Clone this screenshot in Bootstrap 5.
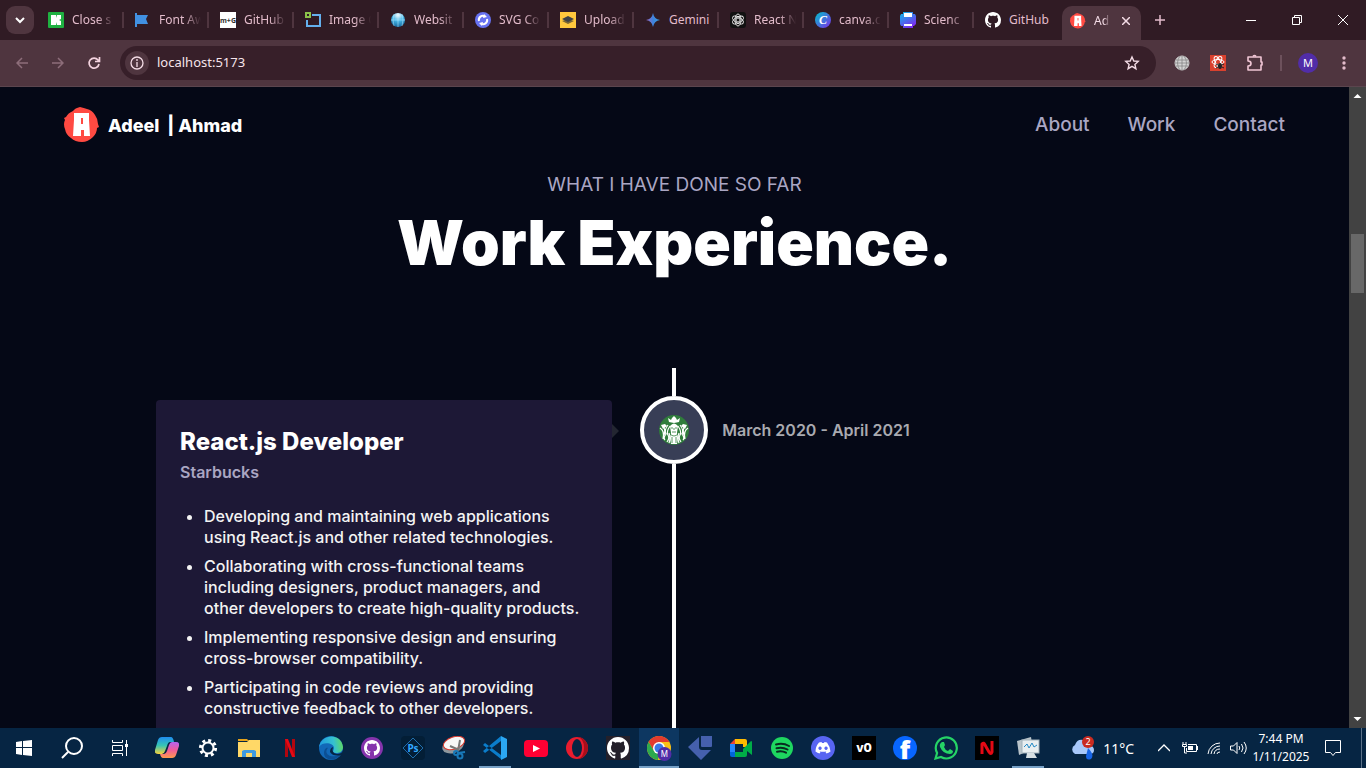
<!DOCTYPE html>
<html lang="en">
<head>
<meta charset="utf-8">
<meta name="viewport" content="width=device-width, initial-scale=1">
<title>Adeel Ahmad | Work Experience</title>
<link href="https://cdn.jsdelivr.net/npm/bootstrap@5.3.0/dist/css/bootstrap.min.css" rel="stylesheet">
<style>
  body { background: #050816; font-family: Inter, sans-serif; color: #fff; }
  button { background: none; border: 0; padding: 0; color: inherit; }
  svg { display: block; flex: none; }
  .chrome-ui, .taskbar { font-family: "Noto Sans", sans-serif; }
  /* tab strip */
  .tabstrip { background: #301b24; height: 40px; color: #e3bccb; font-size: 12px; }
  .tab-menu { width: 28px; height: 28px; border-radius: 9px; background: #4f353f; margin: 6px; }
  .tab { flex: 0 1 85px; min-width: 0; height: 40px; padding-left: 8px; position: relative; gap: 8px; }
  .tab.first { flex-basis: 87px; }
  .tab::after { content: ""; position: absolute; right: 3px; top: 12px; width: 2px; height: 16px; background: #4f353f; }
  .tab.last::after, .tab.current::after { display: none; }
  .tab-label { overflow: hidden; white-space: nowrap; flex: 0 0 42px; text-align: left; -webkit-mask-image: linear-gradient(90deg, #000 60%, transparent); mask-image: linear-gradient(90deg, #000 60%, transparent); }
  .tab-label.whole { -webkit-mask-image: none; mask-image: none; overflow: visible; }
  .tab.current { flex-basis: 79px; background: #4f353f; height: 34px; border-radius: 10px 10px 0 0; align-self: flex-end; padding-bottom: 5px; color: #f4dce6; }
  .tab.current .tab-label { flex-basis: 16px; }
  .new-tab { padding: 0 14px; }
  .win-btn { width: 46px; height: 40px; color: #fff; }
  /* toolbar */
  .toolbar { background: #4f353f; height: 46px; color: #e3bccb; padding-right: 20px; }
  .nav-btn { width: 36px; height: 34px; }
  .dim { opacity: .42; }
  .omnibox { background: #371f29; border-radius: 17px; height: 34px; padding: 0 16px 0 5px; }
  .site-info { width: 24px; height: 24px; border-radius: 50%; background: #4f353f; }
  .address { background: none; border: 0; outline: 0; color: #f6e4eb; font-size: 13px; padding: 0; }
  .extensions { padding-left: 18px; gap: 20px; }
  .divider { width: 2px; height: 16px; background: #6d515c; }
  .account { gap: 16px; margin-left: 16px; }
  .kebab { margin-left: 24px; }
  .avatar { width: 20px; height: 20px; border-radius: 50%; background: #512da8; color: #fff; font-size: 11px; }
  /* web page */
  .viewport { min-height: 0; border-top: 1px solid #5b454e; }
  .site { background: #050816; }
  .site-nav { padding: 20px 64px; height: 76px; }
  .brand-name { font-size: 18px; font-weight: 800; color: #fff; }
  .nav-links { gap: 38px; }
  .nav-item-link { font-size: 19px; font-weight: 500; color: #aaa6c3; text-decoration: none; }
  .intro { padding-top: 8px; }
  .eyebrow { font-size: 19px; line-height: 28px; color: #aaa6c3; }
  .headline { font-size: 62px; line-height: 60px; font-weight: 900; margin-top: 14px; }
  .timeline { max-width: 1037px; margin-top: 95px; }
  .job { width: 44%; background: #1d1836; border-radius: 4px 4px 0 0; padding: 24px; margin-top: 32px; position: relative; }
  .job::after { content: ""; position: absolute; left: 100%; top: 24px; border: 7px solid transparent; border-left-color: #232631; border-right-width: 0; }
  .job-title { font-size: 24px; line-height: 36px; font-weight: 800; }
  .job-company { font-size: 16px; line-height: 24px; font-weight: 600; color: #aaa6c3; }
  .job-list { margin-top: 22px; padding-left: 24px; font-size: 16px; line-height: 21px; font-weight: 500; color: #f3f3f3; white-space: nowrap; }
  .job-list li + li { margin-top: 8px; }
  .rail { margin-left: 28px; }
  .rail-top { width: 4px; height: 28px; background: #fff; }
  .rail-line { width: 4px; background: #fff; }
  .rail-icon { width: 68px; height: 68px; border-radius: 50%; border: 4px solid #fff; background: #383e56; }
  .job-date { margin: 50px 0 0 14px; font-size: 16px; line-height: 24px; font-weight: 600; color: #a9aab0; }
  .scrollbar { width: 17px; background: #424242; padding: 4px 0; color: #fff; }
  .scroll-thumb { width: 13px; height: 59px; margin-top: 134px; background: #686868; }
  /* taskbar */
  .taskbar { background: #062543; height: 40px; color: #fff; }
  .sys-btn { width: 48px; height: 40px; }
  .apps { gap: 1px; margin-left: 3px; }
  .app-btn { width: 40px; height: 40px; position: relative; }
  .app-btn.open::after { content: ""; position: absolute; left: 4px; right: 4px; bottom: 0; height: 2px; background: #76a0c6; }
  .app-btn.active { background: #0d3761; }
  .app-btn.active::after { left: 0; right: 0; }
  .tray { padding-right: 4px; }
  .weather { font-size: 14px; gap: 7px; margin-right: 24px; }
  .tray-icons { gap: 8px; }
  .clock { font-size: 12px; line-height: 18px; width: 68px; }
  .notif { width: 47px; height: 40px; border-right: 1px solid #5b7188; padding-right: 10px; }
</style>
</head>
<body>
<svg width="0" height="0" class="position-absolute" aria-hidden="true">
  <defs>
    <symbol id="github" viewBox="0 0 16 16"><path fill="currentColor" d="M8 0C3.58 0 0 3.58 0 8c0 3.54 2.29 6.53 5.47 7.59.4.07.55-.17.55-.38 0-.19-.01-.82-.01-1.49-2.01.37-2.53-.49-2.69-.94-.09-.23-.48-.94-.82-1.13-.28-.15-.68-.52-.01-.53.63-.01 1.08.58 1.23.82.72 1.21 1.87.87 2.33.66.07-.52.28-.87.51-1.07-1.78-.2-3.64-.89-3.64-3.95 0-.87.31-1.59.82-2.15-.08-.2-.36-1.02.08-2.12 0 0 .67-.21 2.2.82.64-.18 1.32-.27 2-.27s1.36.09 2 .27c1.53-1.04 2.2-.82 2.2-.82.44 1.1.16 1.92.08 2.12.51.56.82 1.27.82 2.15 0 3.07-1.87 3.75-3.65 3.95.29.25.54.73.54 1.48 0 1.07-.01 1.93-.01 2.2 0 .21.15.46.55.38A8.01 8.01 0 0 0 16 8c0-4.42-3.58-8-8-8"/></symbol>
    <symbol id="logo" viewBox="0 0 36 36"><path fill="#ff4a42" d="M9 4q2-3 7-4 4 1 7 2 5 1 8 6 3 4 3 9l1 3-2 1q0 5-4 9-5 5-11 5-7 0-11-4-5-3-6-9-2-5 0-9l-1-2 2-1q2-4 7-6"/><path fill="#fff" fill-rule="evenodd" d="M10 6h15v7l1 16h-6v-6h-3v6H9l1-16zM17 11v6h2v-6z"/></symbol>
    <linearGradient id="gCanva" x1="0" y1="0" x2="1" y2="1"><stop offset="0" stop-color="#00c4cc"/><stop offset="1" stop-color="#7d2ae8"/></linearGradient>
    <linearGradient id="gSci" x1="0" y1="0" x2=".6" y2="1"><stop offset="0" stop-color="#08c0e8"/><stop offset="1" stop-color="#7b2cf0"/></linearGradient>
    <linearGradient id="gGem" x1="0" y1="0" x2="1" y2="0"><stop offset="0" stop-color="#a06bc9"/><stop offset=".5" stop-color="#3f82dc"/><stop offset="1" stop-color="#35a5e5"/></linearGradient>
    <radialGradient id="gGlobe" cx=".5" cy=".15" r=".9"><stop offset="0" stop-color="#fff"/><stop offset=".45" stop-color="#48b8e8"/><stop offset="1" stop-color="#0d5f96"/></radialGradient>
    <linearGradient id="gCopA" x1="0" y1="0" x2="0" y2="1"><stop offset="0" stop-color="#1f8df0"/><stop offset=".5" stop-color="#36c5b4"/><stop offset="1" stop-color="#f7d23c"/></linearGradient>
    <linearGradient id="gCopB" x1="0" y1="0" x2="0" y2="1"><stop offset="0" stop-color="#b463f1"/><stop offset=".5" stop-color="#f05c9a"/><stop offset="1" stop-color="#ff9a4c"/></linearGradient>
    <linearGradient id="gEdge" x1="0" y1=".3" x2="1" y2=".2"><stop offset="0" stop-color="#1f9bde"/><stop offset=".6" stop-color="#35c1d0"/><stop offset="1" stop-color="#62dc5a"/></linearGradient>
  </defs>
</svg>

<div class="vh-100 d-flex flex-column overflow-hidden">
  <header class="chrome-ui flex-shrink-0">
    <div class="tabstrip d-flex align-items-center">
      <button class="tab-menu d-flex align-items-center justify-content-center flex-shrink-0" aria-label="Search tabs"><svg width="10" height="10" viewBox="0 0 10 10" fill="none" stroke="#fff" stroke-width="2"><path d="m1 3 4 4 4-4"/></svg></button>
      <button class="tab first d-flex align-items-center"><svg width="16" height="16" viewBox="0 0 16 16"><rect width="16" height="16" rx="1" fill="#1fb141"/><path fill="#fff" d="M3 3h5v3l1-3h4v4l-2 1 2 1v4H9l-1-3v3H3z"/></svg><span class="tab-label">Close s</span></button>
      <button class="tab d-flex align-items-center"><svg width="16" height="16" viewBox="0 0 16 16" fill="#4191e2"><path d="M0 1h2v14H0zM2 3h11l-2 4 2 5H2z"/></svg><span class="tab-label">Font Aw</span></button>
      <button class="tab d-flex align-items-center"><svg width="16" height="16" viewBox="0 0 16 16"><rect width="16" height="16" fill="#fff"/><text x="8" y="11" font-size="7" font-weight="700" text-anchor="middle" fill="#333">m+G</text></svg><span class="tab-label">GitHub</span></button>
      <button class="tab d-flex align-items-center"><svg width="16" height="16" viewBox="0 0 16 16" fill="none"><path d="M7 3h8v11H2V8" stroke="#64b0ee" stroke-width="2"/><path d="M1 1h4v4H1z" stroke="#8bc34a" stroke-width="2"/></svg><span class="tab-label">Image C</span></button>
      <button class="tab d-flex align-items-center"><svg width="16" height="16" viewBox="0 0 16 16"><circle cx="8" cy="8" r="7" fill="url(#gGlobe)"/><path d="M8 1v14M1 8h14M4 2q-2 6 0 12M12 2q2 6 0 12" stroke="#bfeaff" stroke-width=".5" fill="none"/></svg><span class="tab-label">Websit</span></button>
      <button class="tab d-flex align-items-center"><svg width="16" height="16" viewBox="0 0 16 16"><circle cx="8" cy="8" r="8" fill="#6772f2"/><path d="M4 9a4 4 0 0 1 6-4.500M12 7a4 4 0 0 1-6 4.500" stroke="#fff" stroke-width="2" fill="none"/><path fill="#fff" d="m9 2 3 3-4 1zM7 14l-3-3 4-1z"/></svg><span class="tab-label">SVG Co</span></button>
      <button class="tab d-flex align-items-center"><svg width="16" height="16" viewBox="0 0 16 16"><rect width="16" height="16" fill="#ffc83d"/><path fill="#7b6734" d="m2 9 6 3 6-3-6-2z"/><path fill="#3d4247" d="m2 7 6-3 6 3-6 3z"/></svg><span class="tab-label">Upload</span></button>
      <button class="tab d-flex align-items-center"><svg width="16" height="16" viewBox="0 0 16 16"><path fill="url(#gGem)" d="M8 1q1 6 7 7-6 1-7 7-1-6-7-7 6-1 7-7z"/></svg><span class="tab-label whole">Gemini</span></button>
      <button class="tab d-flex align-items-center"><svg width="16" height="16" viewBox="0 0 16 16"><rect width="16" height="16" rx="3" fill="#111"/><g fill="none" stroke="#eee" stroke-width=".9"><circle cx="8" cy="8" r="2"/><ellipse cx="8" cy="8" rx="3" ry="6"/><ellipse cx="8" cy="8" rx="3" ry="6" transform="rotate(60 8 8)"/><ellipse cx="8" cy="8" rx="3" ry="6" transform="rotate(120 8 8)"/></g></svg><span class="tab-label">React N</span></button>
      <button class="tab d-flex align-items-center"><svg width="16" height="16" viewBox="0 0 16 16"><circle cx="8" cy="8" r="8" fill="url(#gCanva)"/><text x="8" y="12" font-family="Liberation Serif" font-style="italic" font-weight="700" font-size="12" text-anchor="middle" fill="#fff">C</text></svg><span class="tab-label">canva.c</span></button>
      <button class="tab d-flex align-items-center"><svg width="16" height="16" viewBox="0 0 16 16"><path fill="url(#gSci)" d="M3 0h10v2h2l1 2v8l-2 2h-1v2H3v-2H1l-1-2V4l1-2h2z"/><path fill="#fff" d="M4 1h8v4H4zM4 12h8v2H4z"/></svg><span class="tab-label">Scienc</span></button>
      <button class="tab last d-flex align-items-center"><svg width="16" height="16" color="#fff"><use href="#github"/></svg><span class="tab-label whole">GitHub</span></button>
      <div class="tab current d-flex align-items-center"><svg width="16" height="16"><use href="#logo"/></svg><span class="tab-label">Ad</span><button aria-label="Close tab" class="ps-1"><svg width="8" height="8" viewBox="0 0 8 8" stroke="currentColor" stroke-width="1.500"><path d="m0 0 8 8M8 0 0 8"/></svg></button></div>
      <button class="new-tab" aria-label="New tab"><svg width="10" height="10" viewBox="0 0 10 10" stroke="currentColor" stroke-width="1.500"><path d="M5 0v10M0 5h10"/></svg></button>
      <div class="ms-auto d-flex flex-shrink-0">
        <button class="win-btn d-flex align-items-center justify-content-center" aria-label="Minimize"><svg width="10" height="10" viewBox="0 0 10 10"><path fill="#fff" d="M0 5h10v1H0z"/></svg></button>
        <button class="win-btn d-flex align-items-center justify-content-center" aria-label="Restore"><svg width="10" height="10" viewBox="0 0 10 10" fill="none" stroke="#fff"><path d="M.5 2.500h7v7h-7zM2.500 2V.5h7v7H8"/></svg></button>
        <button class="win-btn d-flex align-items-center justify-content-center" aria-label="Close"><svg width="10" height="10" viewBox="0 0 10 10" stroke="#fff"><path d="m0 0 10 10M10 0 0 10"/></svg></button>
      </div>
    </div>
    <div class="toolbar d-flex align-items-center">
      <div class="d-flex ps-1">
        <button class="nav-btn dim d-flex align-items-center justify-content-center" aria-label="Back"><svg width="12" height="12" viewBox="0 0 12 12" fill="none" stroke="currentColor" stroke-width="1.500"><path d="M12 6H1M6 1 1 6l5 5"/></svg></button>
        <button class="nav-btn dim d-flex align-items-center justify-content-center" aria-label="Forward"><svg width="12" height="12" viewBox="0 0 12 12" fill="none" stroke="currentColor" stroke-width="1.500"><path d="M0 6h11M6 1l5 5-5 5"/></svg></button>
        <button class="nav-btn d-flex align-items-center justify-content-center" aria-label="Reload"><svg width="14" height="14" viewBox="0 0 14 14" fill="none" stroke="#f4d3df" stroke-width="1.700"><path d="M12 8a5 5 0 1 1-1-4l1 1M12.500 1v4.500H8"/></svg></button>
      </div>
      <div class="omnibox flex-grow-1 d-flex align-items-center ms-2">
        <button class="site-info d-flex align-items-center justify-content-center" aria-label="Site information"><svg width="14" height="14" viewBox="0 0 14 14" fill="none" stroke="#f4dce6" stroke-width="1.300"><circle cx="7" cy="7" r="6"/><path d="M7 6v5M7 3v2"/></svg></button>
        <input class="address flex-grow-1 ms-2" type="text" value="localhost:5173" aria-label="Address">
        <button aria-label="Bookmark"><svg width="16" height="16" viewBox="0 0 16 16" fill="none" stroke="#f4dce6" stroke-width="1.400"><path d="m8 2 1.800 4 4.400.4-3.300 3 1 4.300L8 11.400l-3.900 2.300 1-4.300-3.300-3L6.200 6z"/></svg></button>
      </div>
      <div class="extensions d-flex align-items-center">
        <button aria-label="Translate"><svg width="16" height="16" viewBox="0 0 16 16" fill="none" stroke="#858585"><circle cx="8" cy="8" r="7" fill="#d4d4d4" stroke="#c8c8c8"/><path d="M8 1v14M1 8h14M2 5h12M2 11h12M6 1q-5 7 0 14M10 1q5 7 0 14" stroke-width=".8"/></svg></button>
        <button aria-label="React tools"><svg width="16" height="16" viewBox="0 0 16 16"><rect width="16" height="16" fill="#d9412e"/><g fill="none" stroke="#fff"><ellipse cx="8" cy="7" rx="6" ry="2.500"/><ellipse cx="8" cy="7" rx="6" ry="2.500" transform="rotate(60 8 7)"/><ellipse cx="8" cy="7" rx="6" ry="2.500" transform="rotate(120 8 7)"/></g><ellipse cx="10" cy="11" rx="2" ry="3" fill="#222"/><path d="m6 9 8 4M6 13l8-4" stroke="#222"/></svg></button>
        <button aria-label="Extensions"><svg width="18" height="18" viewBox="0 0 18 18" fill="none" stroke="#f1c6d5" stroke-width="1.600" stroke-linejoin="round"><path d="M2 3h13v5h1v3h-1v5H2v-4q3 0 3-2.500T2 7z"/><path d="M7 2.500q1.500-2 3 0"/></svg></button>
      </div>
      <div class="account d-flex align-items-center">
        <span class="divider"></span>
        <button class="avatar d-flex align-items-center justify-content-center" aria-label="Profile">M</button>
      </div>
      <button class="kebab" aria-label="Menu"><svg width="4" height="16" viewBox="0 0 4 16" fill="currentColor"><circle cx="2" cy="3" r="1.700"/><circle cx="2" cy="8" r="1.700"/><circle cx="2" cy="13" r="1.700"/></svg></button>
    </div>
  </header>

  <div class="viewport flex-grow-1 d-flex">
    <main class="site flex-grow-1 overflow-hidden d-flex flex-column">
      <nav class="site-nav d-flex align-items-center justify-content-between flex-shrink-0">
        <a href="#" class="d-flex align-items-center gap-2 text-decoration-none"><svg width="36" height="36"><use href="#logo"/></svg><span class="brand-name">Adeel &nbsp;| Ahmad</span></a>
        <div class="nav-links d-flex"><a class="nav-item-link" href="#about">About</a><a class="nav-item-link" href="#work">Work</a><a class="nav-item-link" href="#contact">Contact</a></div>
      </nav>
      <div class="intro text-center flex-shrink-0">
        <p class="eyebrow mb-0 text-uppercase">What I have done so far</p>
        <h2 class="headline mb-0">Work Experience.</h2>
      </div>
      <section class="timeline w-100 mx-auto d-flex flex-grow-1">
        <article class="job">
          <h3 class="job-title mb-0">React.js Developer</h3>
          <p class="job-company mb-0">Starbucks</p>
          <ul class="job-list mb-0">
            <li>Developing and maintaining web applications<br>using React.js and other related technologies.</li>
            <li>Collaborating with cross-functional teams<br>including designers, product managers, and<br>other developers to create high-quality products.</li>
            <li>Implementing responsive design and ensuring<br>cross-browser compatibility.</li>
            <li>Participating in code reviews and providing<br>constructive feedback to other developers.</li>
          </ul>
        </article>
        <div class="rail d-flex flex-column align-items-center">
          <span class="rail-top flex-shrink-0"></span>
          <span class="rail-icon d-flex align-items-center justify-content-center flex-shrink-0">
            <svg width="30" height="30" viewBox="0 0 30 30"><circle cx="15" cy="15" r="15" fill="#2f7d3b"/><g fill="none" stroke="#fff" stroke-width="1.200"><path d="M9 10q-4 5-2 9-3 4-1 6M11 11q-4 6-2 9t-1 7M21 10q4 5 2 9 3 4 1 6M19 11q4 6 2 9t1 7M1 13q5 3 3 11M29 13q-5 3-3 11M4 11q3 4 1 9M26 11q-3 4-1 9M10 18q2 5 0 10M20 18q-2 5 0 10"/></g><path fill="#fff" d="m10 7-1-4 3 2 1-2 2-2 2 2 1 2 3-2-1 4-5 1zM2 10l4-1 2 2-4 3zM28 10l-4-1-2 2 4 3zM11 11q4-5 8 0l-1 7 1 5-1 6h-6l-1-6 1-5z"/><path fill="none" stroke="#2f7d3b" stroke-width=".8" d="M12 13h2M16 13h2M15 13v2M13 17h4M11 19q4 4 8 0M13 22v6M17 22v6"/></svg>
          </span>
          <span class="rail-line flex-grow-1"></span>
        </div>
        <p class="job-date">March 2020 - April 2021</p>
      </section>
    </main>
    <aside class="scrollbar d-flex flex-column align-items-center flex-shrink-0" aria-hidden="true">
      <svg width="9" height="9" viewBox="0 0 9 9" fill="#fff"><path d="m4.500 3 4 4h-8z"/></svg>
      <div class="scroll-thumb"></div>
      <svg width="9" height="9" viewBox="0 0 9 9" fill="#fff" class="mt-auto"><path d="m4.500 6 4-4h-8z"/></svg>
    </aside>
  </div>

  <footer class="taskbar d-flex align-items-center flex-shrink-0">
    <button class="sys-btn d-flex align-items-center justify-content-center" aria-label="Start"><svg width="16" height="16" viewBox="0 0 16 16" fill="#fff"><path d="m0 2 6-1v6H0zM7 1l9-1v7H7zM0 8h6v7l-6-1zM7 8h9v8l-9-1z"/></svg></button>
    <button class="sys-btn d-flex align-items-center justify-content-center" aria-label="Search"><svg width="22" height="22" viewBox="0 0 22 22" fill="none" stroke="#fff" stroke-width="2"><circle cx="13" cy="9" r="8"/><path d="m7 15-6 6"/></svg></button>
    <button class="sys-btn d-flex align-items-center justify-content-center" aria-label="Task view"><svg width="16" height="16" viewBox="0 0 16 16" fill="none" stroke="#fff"><path d="M.5 0v2.500h10V0M.5 16v-2.500h10V16M.5 5.500h10v5H.5zM14.500 0v16"/><path fill="#fff" stroke="none" d="M13 4h3v3h-3z"/></svg></button>
    <div class="apps d-flex">
      <button class="app-btn d-flex align-items-center justify-content-center" aria-label="Copilot"><svg width="24" height="22" viewBox="0 0 24 22"><path fill="url(#gCopA)" d="M7 0h9q2 0 3 5h-4q-2 0-3 4l-2 5q-1 3-3 3H3q-4 0-3-4L3 3q1-3 4-3z"/><path fill="url(#gCopB)" d="M17 5h4q4 0 3 4l-3 9q-1 3-4 3H8q-2 0-3-4h4q2 0 3-3l2-6q1-3 3-3z"/></svg></button>
      <button class="app-btn d-flex align-items-center justify-content-center" aria-label="Settings"><svg width="20" height="20" viewBox="0 0 20 20" fill="none" stroke="#fff"><circle cx="10" cy="10" r="5.500" stroke-width="2"/><circle cx="10" cy="10" r="7.600" stroke-width="3" stroke-dasharray="2.980 2.980"/></svg></button>
      <button class="app-btn d-flex align-items-center justify-content-center" aria-label="File Explorer"><svg width="22" height="18" viewBox="0 0 22 18"><path fill="#e5a31b" d="M0 0h9l2 2H0z"/><path fill="#ffd867" d="M0 3h9l2-2h11v17H0z"/><path fill="#3e9ae0" d="M4 18v-6l2-1h10l2 1v6h-4v-4H8v4z"/></svg></button>
      <button class="app-btn d-flex align-items-center justify-content-center" aria-label="Netflix"><svg width="12" height="18" viewBox="0 0 12 18"><path fill="#b1060f" d="M1 0h3v18H1zM8 0h3v18H8z"/><path fill="#e50914" d="M1 0h3l7 18H8z"/></svg></button>
      <button class="app-btn d-flex align-items-center justify-content-center" aria-label="Edge"><svg width="24" height="24" viewBox="0 0 24 24"><circle cx="12" cy="12" r="12" fill="#1268b8"/><path fill="url(#gEdge)" d="M0 11C2-2 22-4 24 11c0 5-4 6-7 6-5 0-2-3-2-5 0-5-11-7-15-1z"/><path fill="#0c4f94" d="M9 12c-5 5 2 12 13 6-5 8-17 7-17-1 0-3 2-6 4-5z"/><path fill="#062543" d="M14 11q-2 6 4 7 4 0 6-3l-1 4q-9 2-12-3 0-4 3-5z"/></svg></button>
      <button class="app-btn d-flex align-items-center justify-content-center" aria-label="GitHub Desktop"><svg width="22" height="22" viewBox="0 0 22 22" color="#fff"><circle cx="11" cy="11" r="11" fill="#8534ac"/><use href="#github" x="3" y="3" width="16" height="16"/></svg></button>
      <button class="app-btn d-flex align-items-center justify-content-center" aria-label="Photoshop"><svg width="24" height="24" viewBox="0 0 24 24"><rect width="24" height="24" rx="4" fill="#031e36"/><path d="m12 2 10 10-10 10L2 12z" fill="none" stroke="#1f6ead"/><text x="12" y="16" text-anchor="middle" font-size="10" font-weight="700" fill="#31a8ff">Ps</text></svg></button>
      <button class="app-btn d-flex align-items-center justify-content-center" aria-label="Snipping Tool"><svg width="24" height="24" viewBox="0 0 24 24"><ellipse cx="11" cy="10" rx="11" ry="7" fill="#8e979d" transform="rotate(-18 11 10)"/><ellipse cx="12" cy="7" rx="11" ry="6" fill="#f7f7f7" stroke="#d8382d" transform="rotate(-18 12 7)"/><path stroke="#777" stroke-width="2" d="m8 10 9 4M18 4l-2 11"/><g fill="none" stroke="#1878b8" stroke-width="2"><circle cx="14" cy="17" r="2"/><circle cx="18" cy="20" r="2.500"/><path d="m16 17 7-1"/></g></svg></button>
      <button class="app-btn open d-flex align-items-center justify-content-center" aria-label="Visual Studio Code"><svg width="24" height="24" viewBox="0 0 24 24"><path fill="#0b7dcb" d="m2 7 16 12v4L0 9zM2 17 18 5V0L0 15z"/><path fill="#2ba7f3" d="m18 0 6 3v18l-6 3z"/></svg></button>
      <button class="app-btn d-flex align-items-center justify-content-center" aria-label="YouTube"><svg width="24" height="17" viewBox="0 0 24 17"><rect width="24" height="17" rx="4" fill="#ff0033"/><path fill="#fff" d="m9 5 7 3.500L9 12z"/></svg></button>
      <button class="app-btn d-flex align-items-center justify-content-center" aria-label="Opera"><svg width="22" height="22" viewBox="0 0 22 22"><circle cx="11" cy="11" r="11" fill="#e81c2e"/><path fill="#a70e1b" d="M11 0a11 11 0 0 1 0 22q7-1 7-11T11 0"/><ellipse cx="11" cy="11" rx="5" ry="9" fill="#062543"/></svg></button>
      <button class="app-btn d-flex align-items-center justify-content-center" aria-label="GitHub"><svg width="24" height="24" viewBox="0 0 24 24" color="#fff"><rect width="24" height="24" fill="#24202a"/><use href="#github" x="1" y="1" width="22" height="22"/></svg></button>
      <button class="app-btn open active d-flex align-items-center justify-content-center" aria-label="Chrome"><svg width="25" height="25" viewBox="0 0 25 25"><circle cx="12" cy="12" r="12" fill="#fbc116"/><path fill="#e33b2e" d="M1.600 6A12 12 0 0 1 22.400 6H12l-5 9z"/><path fill="#2da94f" d="M1.600 6 7 15l5 3-1 6A12 12 0 0 1 1.600 6"/><circle cx="12" cy="12" r="6" fill="#fff"/><circle cx="12" cy="12" r="4.500" fill="#3b78e7"/><circle cx="17.500" cy="18" r="7" fill="#512da8"/><text x="17.500" y="21" font-size="8" text-anchor="middle" fill="#fff">M</text></svg></button>
      <button class="app-btn d-flex align-items-center justify-content-center" aria-label="Sketch app"><svg width="24" height="24" viewBox="0 0 24 24" fill="#4560ad"><path d="M13 0h11v10q0 1-1 1H14q-1 0-1-1zM0 11l11-10v10q0 3 3 3h9L13 24z"/></svg></button>
      <button class="app-btn d-flex align-items-center justify-content-center" aria-label="Google Meet"><svg width="22" height="18" viewBox="0 0 22 18"><path fill="#2684fc" d="M0 5h5v9H0z"/><path fill="#ea4335" d="m0 5 5-5v5z"/><path fill="#ffba00" d="M5 0h10q2 0 2 2v6h-4V5H5z"/><path fill="#0066da" d="M0 13h5v5H2q-2 0-2-2z"/><path fill="#00ac47" d="M5 13h8v-3l8-8q1 0 1 1v13l-5-4v4q0 2-2 2H5z"/></svg></button>
      <button class="app-btn d-flex align-items-center justify-content-center" aria-label="Spotify"><svg width="22" height="22" viewBox="0 0 22 22"><circle cx="11" cy="11" r="11" fill="#1ed760"/><path fill="none" stroke="#082c20" stroke-linecap="round" stroke-width="2" d="M5 7.500q7-2 13 1.500M5.500 11.200q6-1.500 11 1.300M6 14.700q5-1.200 9 1"/></svg></button>
      <button class="app-btn d-flex align-items-center justify-content-center" aria-label="Discord"><svg width="24" height="24" viewBox="0 0 24 24"><circle cx="12" cy="12" r="12" fill="#5865f2"/><path fill="#fff" fill-rule="evenodd" d="M8 6.500 10.500 6l.5 1h2l.5-1 2.500.5q3 4 3.500 9-2 1.500-4 2l-1-1.500 1-.7q-3.500 1-7 0l1 .7-1 1.500q-2-.5-4-2 0-5 3.500-9zM9 10.500a1.700 1.700 0 1 0 .1 0zm6 0a1.700 1.700 0 1 0 .1 0z"/></svg></button>
      <button class="app-btn d-flex align-items-center justify-content-center" aria-label="v0"><svg width="24" height="24" viewBox="0 0 24 24"><rect width="24" height="24"/><text x="12" y="16" font-family="Inter" font-size="12" font-weight="800" text-anchor="middle" fill="#fff">v0</text></svg></button>
      <button class="app-btn d-flex align-items-center justify-content-center" aria-label="Facebook"><svg width="24" height="24" viewBox="0 0 24 24"><circle cx="12" cy="12" r="12" fill="#0866ff"/><text x="12" y="23" text-anchor="middle" font-family="Open Sans" font-size="25" font-weight="800" fill="#fff">f</text></svg></button>
      <button class="app-btn d-flex align-items-center justify-content-center" aria-label="WhatsApp"><svg width="24" height="24" viewBox="0 0 24 24"><path fill="none" stroke="#25d366" stroke-width="2.200" d="m1.500 22.500 1.600-5.500A10.500 10.500 0 1 1 7 21z"/><path fill="#25d366" d="M8 6h2l1 3-1 2q1 3 4 4l2-2 3 2q0 3-3 3Q9 18 6 11q-1-3 2-5"/></svg></button>
      <button class="app-btn d-flex align-items-center justify-content-center" aria-label="Notes"><svg width="24" height="24" viewBox="0 0 24 24"><rect width="24" height="24"/><path fill="none" stroke="#e50914" stroke-width="3" stroke-linejoin="round" d="M7 18V8q2-2 3 1l4 7q2 3 3 0V5"/></svg></button>
      <button class="app-btn open d-flex align-items-center justify-content-center" aria-label="System monitor"><svg width="24" height="22" viewBox="0 0 24 22"><path fill="#b9c4ca" d="M1 4 15 0l2 12-14 6z"/><rect x="6" y="3" width="17" height="13" fill="#e8eef0" stroke="#a1b1ba"/><path fill="#d6dfe3" d="M11 16h7l3 5H10z"/><path d="m8 10 3-3 2 4 3-5 2 4 3-2" fill="none" stroke="#258ac5"/></svg></button>
    </div>
    <div class="tray d-flex align-items-center ms-auto flex-shrink-0">
      <button class="weather d-flex align-items-center"><svg width="26" height="24" viewBox="0 0 26 24"><path fill="#a8c8fa" d="M5 18a5 5 0 0 1 0-9q2-6 8-5 5 1 6 5 5 1 5 5 0 4-4 4z"/><path fill="#1765e8" d="M18 12q7 7 3 11-5 2-5-3z"/><circle cx="18" cy="6" r="6" fill="#c92b21"/><text x="18" y="9" font-size="9" text-anchor="middle" fill="#fff">2</text></svg>11°C</button>
      <div class="tray-icons d-flex align-items-center">
        <button aria-label="Hidden icons" class="me-1"><svg width="12" height="8" viewBox="0 0 12 8" fill="none" stroke="#fff" stroke-width="1.300"><path d="m0 7 6-6 6 6"/></svg></button>
        <button aria-label="Battery"><svg width="16" height="12" viewBox="0 0 16 12" fill="none" stroke="#fff"><path d="M6 2.500h8.500v7h-10V6M15.500 4v4M1 0v2M4 0v2M.5 2.500h4v2h-4zM2.500 5v6H5"/><path fill="#fff" stroke="none" d="M6 4h5v4H6z"/></svg></button>
        <button aria-label="Network"><svg width="16" height="16" viewBox="0 0 16 16" fill="none" stroke="#fff"><path d="M2 14A12 12 0 0 1 14 3M5 14a9 9 0 0 1 9-8M8 14a6 6 0 0 1 6-5M11 14q0-2 3-2"/></svg></button>
        <button aria-label="Volume"><svg width="17" height="14" viewBox="0 0 17 14" fill="none" stroke="#fff"><path d="M.5 5h3L7 1.500v11L3.500 9h-3zM9 5q1.500 2 0 4M11.500 3q3 4 0 8M14 1q4.500 6 0 12"/></svg></button>
      </div>
      <button class="clock text-center">7:44 PM<br>1/11/2025</button>
      <button class="notif d-flex align-items-center justify-content-center" aria-label="Notifications"><svg width="16" height="16" viewBox="0 0 16 16" fill="none" stroke="#fff"><path d="M.5.500h15v12h-5l-2.500 3-2.500-3h-5z"/></svg></button>
    </div>
  </footer>
</div>
<script src="https://cdn.jsdelivr.net/npm/bootstrap@5.3.0/dist/js/bootstrap.bundle.min.js"></script>
</body>
</html>
